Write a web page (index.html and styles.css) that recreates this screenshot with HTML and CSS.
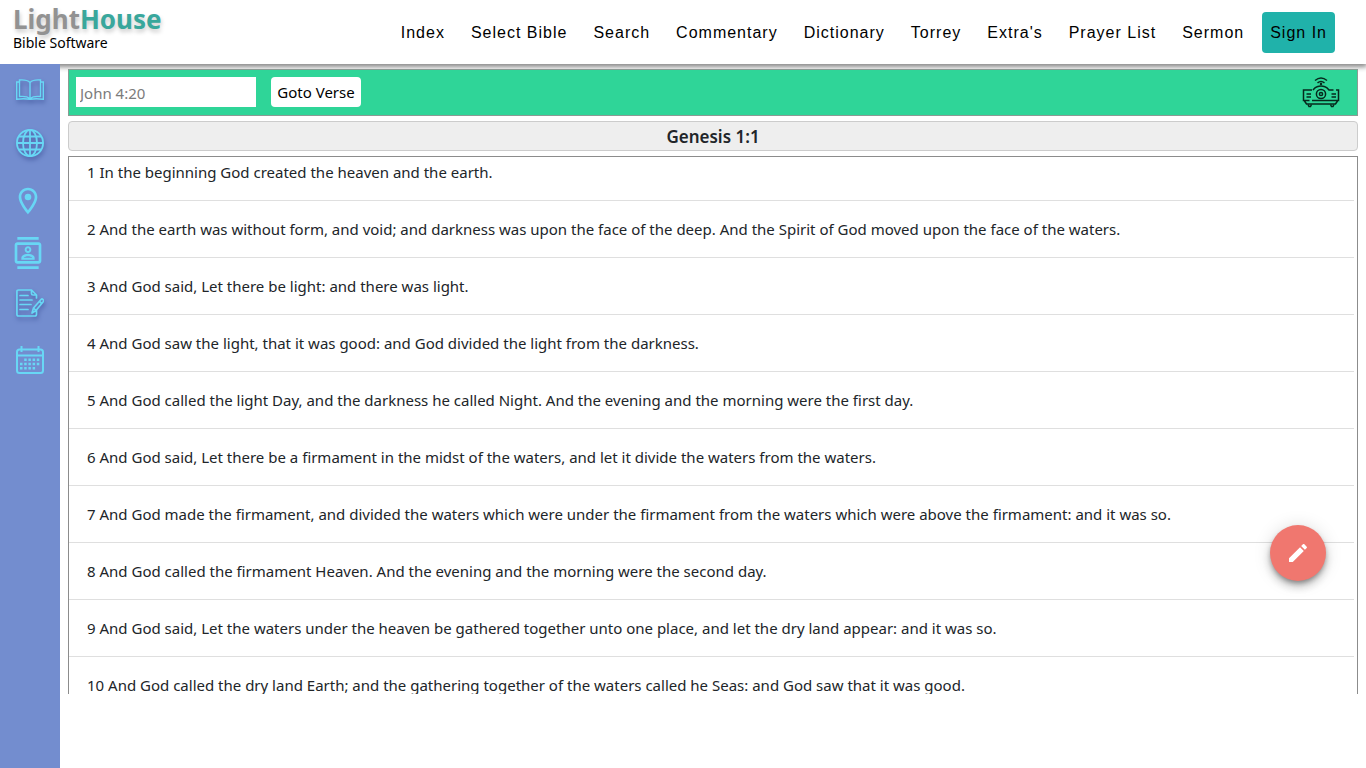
FILE: index.html
```html
<!DOCTYPE html>
<html lang="en">
<head>
<meta charset="utf-8">
<title>LightHouse Bible Software</title>
<link rel="stylesheet" href="styles.css">
</head>
<body>
<header class="topbar">
  <a class="brand" href="#">
    <span class="brand-name"><span class="brand-light">Light</span><span class="brand-house">House</span></span>
    <span class="brand-sub">Bible Software</span>
  </a>
  <nav class="nav">
    <a href="#">Index</a>
    <a href="#">Select Bible</a>
    <a href="#">Search</a>
    <a href="#">Commentary</a>
    <a href="#">Dictionary</a>
    <a href="#">Torrey</a>
    <a href="#">Extra's</a>
    <a href="#">Prayer List</a>
    <a href="#">Sermon</a>
    <a class="signin" href="#">Sign In</a>
  </nav>
</header>
<div class="body">
  <aside class="sidebar">
    <a class="tool shaded" href="#" aria-label="Bible">
      <svg viewBox="0 0 28 28" fill="none" stroke="currentColor" stroke-width="1.400"><path d="M14 6.500C11.500 4 7 3.700 3.500 4v16.500c4-.4 8 0 10.500 2 2.500-2 6.500-2.400 10.500-2V4C21 3.700 16.500 4 14 6.500zM14 6.500v16M3.500 6H.7v17.300c5-.8 9-.8 13.300 0 4.300-.8 8.300-.8 13.300 0V6h-2.800"/></svg>
    </a>
    <a class="tool shaded globe" href="#" aria-label="Web">
      <svg viewBox="0 0 28 28" fill="none" stroke="currentColor" stroke-width="1.800"><circle cx="14" cy="14" r="13.100"/><ellipse cx="14" cy="14" rx="7" ry="13.100"/><path d="M14 .8v26.400M.8 14h26.400M3 7.500h22M3 20.500h22"/></svg>
    </a>
    <a class="tool wide pin" href="#" aria-label="Maps">
      <svg viewBox="0 0 24 24" fill="currentColor"><path d="M12 2C8.130 2 5 5.130 5 9c0 5.250 7 13 7 13s7-7.750 7-13c0-3.870-3.130-7-7-7zM7 9c0-2.760 2.240-5 5-5s5 2.240 5 5c0 2.880-2.880 7.190-5 9.880C9.920 16.210 7 11.850 7 9z"/><circle cx="12" cy="9" r="2.500"/></svg>
    </a>
    <a class="tool wide people" href="#" aria-label="Contacts">
      <svg viewBox="0 0 24 24" fill="currentColor"><path d="M4 0h16v2H4zM4 22h16v2H4zM20 4H4c-1.100 0-2 .9-2 2v12c0 1.100.9 2 2 2h16c1.100 0 2-.9 2-2V6c0-1.100-.9-2-2-2zm0 14H4V6h16v12zM12 12c1.380 0 2.500-1.120 2.500-2.500S13.380 7 12 7 9.500 8.120 9.500 9.500 10.620 12 12 12zm0-3.500c.55 0 1 .45 1 1s-.45 1-1 1-1-.45-1-1 .45-1 1-1zM17 15.590c0-2.080-3.310-2.980-5-2.980s-5 .9-5 2.980V17h10v-1.410zm-8.190-.09c.61-.52 2.030-1 3.190-1 1.170 0 2.590.48 3.200 1H8.810z"/></svg>
    </a>
    <a class="tool shaded notes" href="#" aria-label="Notes">
      <svg viewBox="0 0 28 28" fill="none" stroke="currentColor" stroke-width="1.700" stroke-linejoin="round" stroke-linecap="round"><path d="M20.500 9V6l-5-5H2.500Q.9 1 .9 2.700v22.600Q.9 27 2.500 27h16.300q1.700 0 1.700-1.700v-4M15.500 1v3.500Q15.500 6 17 6h3.500M4 6.500h8M4 11h12M4 15.500h11M4 20.500h8M16 24l1.500-5 7.500-8.500q1-1 2 0t.2 2.200L20 21.500zM17.500 19l2.500 2.500M23.500 12.500l2.300 2"/></svg>
    </a>
    <a class="tool calendar" href="#" aria-label="Calendar">
      <svg viewBox="0 0 28 28" fill="none" stroke="currentColor" stroke-width="2"><rect x="1" y="3.500" width="26" height="23.500" rx="2.500"/><path d="M1 9.500h26M5.500 0v6M22.500 0v6"/><path stroke-width="2.500" stroke-dasharray="2.500 1.700" d="M8.200 13.700h15.500M4 18h19.500M4 22.300h15.500"/></svg>
    </a>
  </aside>
  <main class="content">
    <form class="toolbar">
      <input class="verse-input" type="text" placeholder="John 4:20" aria-label="Verse">
      <button class="goto" type="button">Goto Verse</button>
      <button class="projector" type="button" aria-label="Projector">
        <svg viewBox="0 0 38 32" fill="none" stroke="currentColor" stroke-width="1.500"><path d="M13 4.500q6-5 12 0M15.500 6.800q3.500-2.800 7 0"/><circle cx="19" cy="8" r=".5" fill="currentColor"/><path d="M10 14H1.500v10.500h6M10 24.500h26.500V14H34M31.500 14H28M11 14q2-2.500 4-3.200 4-1.600 8 0 2 .7 4 3.200h2M2.500 25l2 3h29l2-3"/><circle cx="19" cy="18" r="4.600"/><circle cx="19" cy="18" r="1.600"/><path d="M4.500 18H9M4.500 21H9M29.500 18h4.500M29.500 21h4.500M6 28.500l1 2h1.500l1-2M28.500 28.500l1 2H31l1-2"/></svg>
      </button>
    </form>
    <h1 class="title">Genesis 1:1</h1>
    <div class="verses">
      <p>1 In the beginning God created the heaven and the earth.</p>
      <p>2 And the earth was without form, and void; and darkness was upon the face of the deep. And the Spirit of God moved upon the face of the waters.</p>
      <p>3 And God said, Let there be light: and there was light.</p>
      <p>4 And God saw the light, that it was good: and God divided the light from the darkness.</p>
      <p>5 And God called the light Day, and the darkness he called Night. And the evening and the morning were the first day.</p>
      <p>6 And God said, Let there be a firmament in the midst of the waters, and let it divide the waters from the waters.</p>
      <p>7 And God made the firmament, and divided the waters which were under the firmament from the waters which were above the firmament: and it was so.</p>
      <p>8 And God called the firmament Heaven. And the evening and the morning were the second day.</p>
      <p>9 And God said, Let the waters under the heaven be gathered together unto one place, and let the dry land appear: and it was so.</p>
      <p>10 And God called the dry land Earth; and the gathering together of the waters called he Seas: and God saw that it was good.</p>
    </div>
  </main>
</div>
<button class="fab" type="button" aria-label="Edit">
  <svg viewBox="0 0 24 24" fill="currentColor"><path d="M3 17.250V21h3.750L17.810 9.940l-3.750-3.750L3 17.250zM20.710 7.040c.39-.39.39-1.020 0-1.410l-2.340-2.340c-.39-.39-1.020-.39-1.410 0l-1.830 1.830 3.750 3.750 1.830-1.830z"/></svg>
</button>
</body>
</html>
```
FILE: styles.css
```css
* { box-sizing: border-box; }

body {
  margin: 0;
  min-height: 100vh;
  display: flex;
  flex-direction: column;
  background: #fff;
  color: #212529;
  font-family: "Noto Sans", "Open Sans", sans-serif;
  font-size: 15px;
}

a { color: inherit; text-decoration: none; }
svg { display: block; width: 100%; height: 100%; }

.topbar {
  display: flex;
  justify-content: space-between;
  height: 64px;
  padding: 0 31px 0 13px;
  background: #fff;
  box-shadow: 0 2px 5px 1px #888;
}

.brand {
  display: flex;
  flex-direction: column;
  padding-top: 4px;
  color: #000;
}
.brand-name {
  font-size: 26px;
  font-weight: 700;
  line-height: 30px;
  text-shadow: 1px 3px 4px #ccc;
}
.brand-light { color: #929292; }
.brand-house { color: #39a79c; }
.brand-sub { font-size: 14px; line-height: 18px; }

.nav {
  display: flex;
  align-items: center;
  gap: 10px;
  color: #000;
  font-family: "Liberation Sans", Arial, sans-serif;
  font-size: 16px;
  letter-spacing: 1px;
  white-space: nowrap;
}
.nav a { padding: 0 8px; line-height: 41px; }
.nav .signin { border-radius: 4px; background: #20b2aa; }

.body { display: flex; flex: 1; }

.sidebar {
  position: relative;
  width: 60px;
  flex-shrink: 0;
  padding: 12px 0 0 16px;
  background: #738dcf;
  color: #68d7f5;
}
.tool { display: block; width: 28px; height: 28px; }
.wide { width: 32px; height: 32px; margin-left: -4px; }
.shaded { filter: drop-shadow(1px 3px 2px #4c63a8); }
.globe { margin-top: 25px; }
.pin { margin-top: 28px; }
.people, .notes { margin-top: 20px; }
.calendar { margin-top: 29px; }

.content {
  flex: 1;
  min-width: 0;
  display: flex;
  flex-direction: column;
  gap: 5px;
  padding: 5px 8px 0;
}

.toolbar {
  position: relative;
  display: flex;
  align-items: center;
  gap: 15px;
  height: 47px;
  padding: 0 17px 1px 7px;
  border: 1px solid #8b9b94;
  background: #2fd598;
}
.verse-input {
  width: 180px;
  height: 30px;
  padding: 2px 4px 0;
  border: 0;
  background: #fff;
  font: inherit;
}
.verse-input::placeholder { color: #7b7b7b; opacity: 1; }
.goto {
  width: 90px;
  height: 30px;
  padding: 0;
  border: 0;
  border-radius: 4px;
  background: #fff;
  color: #000;
  font: inherit;
}
.projector {
  width: 38px;
  height: 32px;
  margin-left: auto;
  padding: 0;
  border: 0;
  background: none;
  color: #06291c;
}

.title {
  margin: 0;
  border: 1px solid #ccc;
  border-radius: 4px;
  background: #eee;
  font-size: 17px;
  font-weight: 600;
  line-height: 28px;
  padding-top: 1px;
  height: 30px;
  text-align: center;
}

.verses {
  height: calc(100vh - 230px);
  overflow: hidden;
  padding-right: 3px;
  border: 1px solid #8c8c8c;
  border-bottom: 0;
}
.verses p {
  margin: 0;
  padding: 16px 18px;
  border-bottom: 1px solid #dfdfdf;
  line-height: 24px;
}
.verses p:first-child { padding-top: 3px; }

.fab {
  position: fixed;
  right: 40px;
  bottom: 187px;
  width: 56px;
  height: 56px;
  padding: 16px;
  border: 0;
  border-radius: 50%;
  background: #f0776f;
  color: #fff;
  box-shadow: 0 3px 5px -1px #0005, 0 6px 10px #0003, 0 1px 18px #0002;
}
```
